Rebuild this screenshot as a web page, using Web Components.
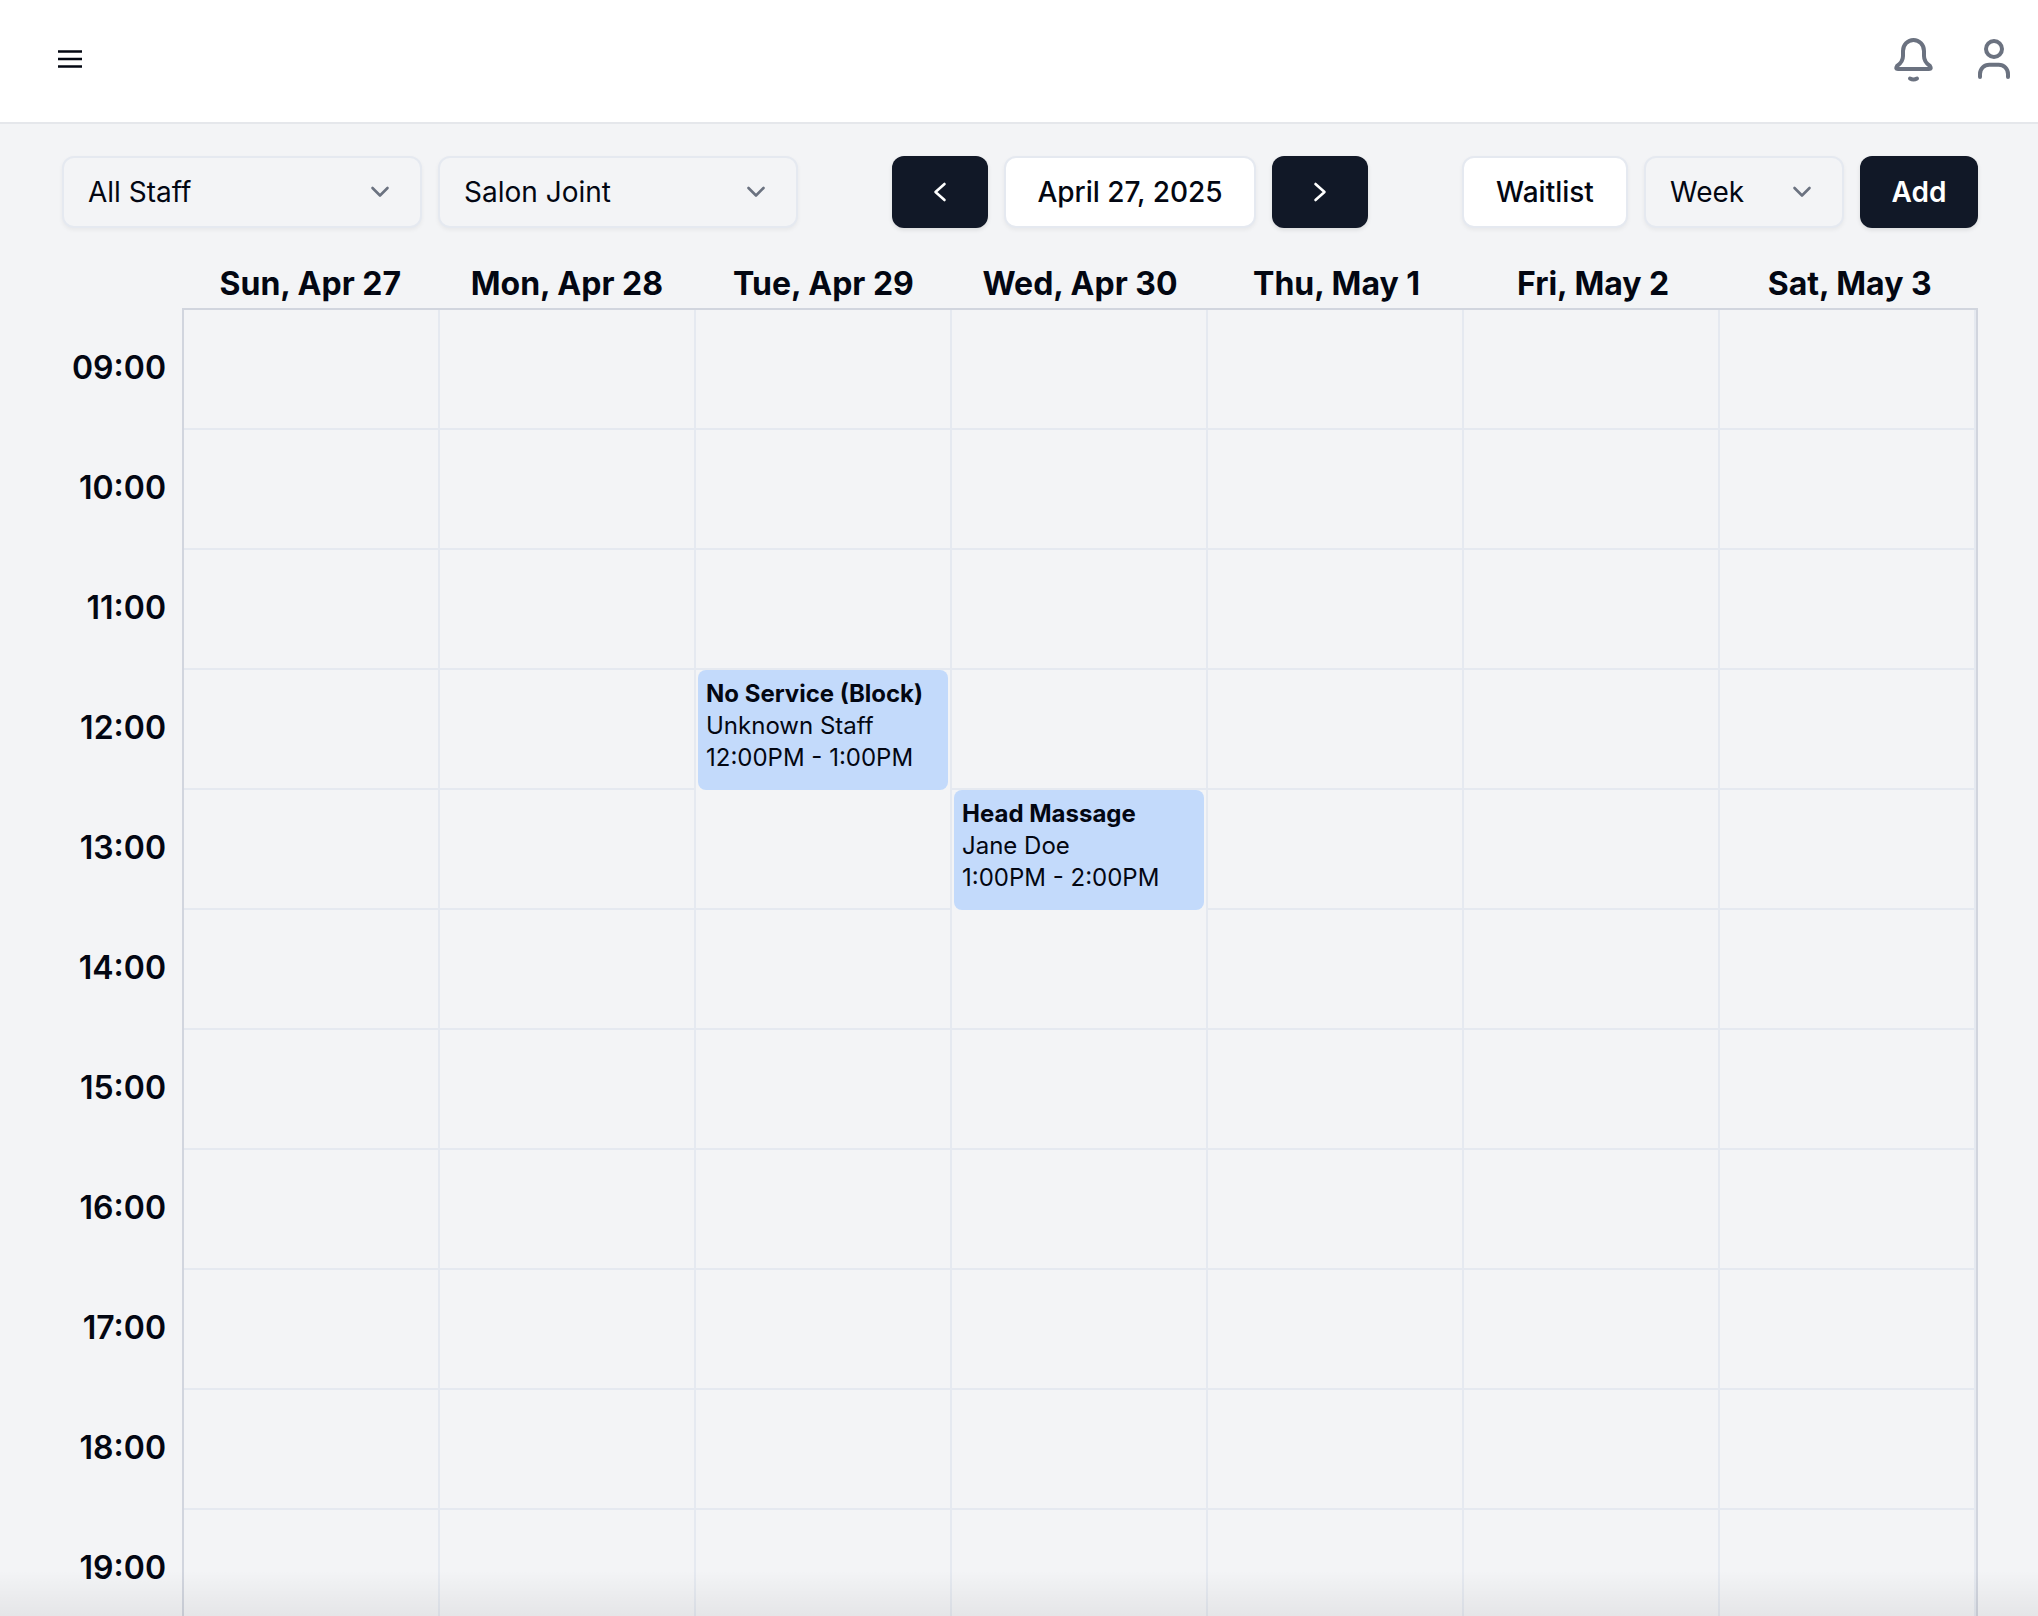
<!DOCTYPE html>
<html><head><meta charset="utf-8"><style>
html,body{margin:0;height:100%;overflow:hidden;background:#f3f4f6;font-family:Inter,"Liberation Sans",sans-serif;color:#030712}
</style></head><body>
<app-shell>
<top-bar></top-bar>
<main-tools></main-tools>
<week-grid></week-grid>
</app-shell>
<script>
const def=(n,html)=>customElements.define(n,class extends HTMLElement{constructor(){super();this.attachShadow({mode:'open'}).innerHTML=typeof html==='function'?html(this):html}});
const chev='<svg width="24" height="16" viewBox="0 0 24 16" fill="none" stroke="#6b7280" stroke-width="2.6" stroke-linecap="round" stroke-linejoin="round"><path d="M4.500 4 12 11.500 19.500 4"/></svg>';
def('app-shell',`<style>:host{display:flex;flex-direction:column;width:2038px;height:1616px;overflow:hidden;position:relative}
.fade{position:absolute;left:0;right:0;bottom:0;height:46px;background:linear-gradient(to bottom,rgba(0,0,0,0),rgba(0,0,0,.06));pointer-events:none}</style><slot></slot><div class="fade"></div>`);
def('top-bar',`<style>:host{display:flex;align-items:center;justify-content:space-between;height:122px;flex:none;background:#fff;border-bottom:2px solid #e5e7eb;padding:0 26px 0 58px}
.r{display:flex;align-items:center;gap:40px}svg{display:block}</style>
<svg width="24" height="20" viewBox="0 0 24 20" fill="none" stroke="#030712" stroke-width="2.600" style="margin-top:-4px"><path d="M0 2.500h24M0 10h24M0 17.500h24"/></svg>
<div class="r">
<svg width="44" height="48" viewBox="0 0 44 48" fill="none" stroke="#6b7280" stroke-width="4" stroke-linecap="round" stroke-linejoin="round" style="margin-top:-2px"><path d="M11 15A10.500 11 0 0 1 32 15V20C32 25 35 28 38 30Q40 33 37 33H6Q3 33 5 30C8 28 11 25 11 20Z"/><path d="M18 42.500Q21.500 44.500 25 42.500"/></svg>
<svg width="36" height="44" viewBox="0 0 36 44" fill="none" stroke="#6b7280" stroke-width="4" stroke-linecap="round" stroke-linejoin="round" style="margin-top:-4px"><circle cx="18" cy="12" r="8"/><path d="M4 40V37A9.300 9.300 0 0 1 13.300 27.700H22.700A9.300 9.300 0 0 1 32 37V40"/></svg>
</div>`);
def('tool-select',h=>`<style>:host{display:flex;align-items:center;justify-content:space-between;box-sizing:border-box;height:72px;width:${h.getAttribute('w')}px;padding:0 28px 0 24px;background:#f3f4f6;border:2px solid #e5e9f0;border-radius:12px;box-shadow:0 2px 4px rgba(0,0,0,.05);font-size:28px;color:#030712}
svg{display:block}</style><span><slot></slot></span>${chev}`);
def('tool-btn',h=>{const d=h.hasAttribute('dark');return `<style>:host{display:flex;align-items:center;justify-content:center;box-sizing:border-box;height:72px;width:${h.getAttribute('w')}px;border-radius:12px;font-size:28px;font-weight:${h.hasAttribute('bold')?600:500};${d?'background:#111827;color:#fff;box-shadow:0 2px 4px rgba(0,0,0,.1)':'background:#fff;color:#030712;border:2px solid #e5e9f0;box-shadow:0 2px 4px rgba(0,0,0,.05)'}}
svg{display:block}</style><slot></slot>`});
const arrow=d=>`<svg width="24" height="24" viewBox="0 0 24 24" fill="none" stroke="#fff" stroke-width="2.600" stroke-linecap="round" stroke-linejoin="round"><path d="${d}"/></svg>`;
def('main-tools',`<style>:host{display:flex;align-items:center;justify-content:space-between;flex:none;padding:32px 60px 0 62px;height:72px}
.g{display:flex;align-items:center;gap:16px}</style>
<div class="g"><tool-select w="360">All Staff</tool-select><tool-select w="360">Salon Joint</tool-select></div>
<div class="g">
<tool-btn dark w="96">${arrow('M16.500 4 7.500 12l9 8')}</tool-btn>
<tool-btn w="252">April 27, 2025</tool-btn>
<tool-btn dark w="96">${arrow('m7.500 4 9 8-9 8')}</tool-btn></div>
<div class="g"><tool-btn w="166">Waitlist</tool-btn><tool-select w="200">Week</tool-select><tool-btn dark bold w="118">Add</tool-btn></div>`);
def('cal-event',`<style>:host{display:block;box-sizing:border-box;height:120px;width:250px;margin-left:2px;padding:8px;background:#c3dafb;border-radius:8px;font-size:24px;line-height:32px;color:#030712;overflow:hidden}
b{display:block;font-weight:700}</style><b><slot name="t"></slot></b><div><slot name="who"></slot></div><div><slot name="when"></slot></div>`);
const days=['Sun, Apr 27','Mon, Apr 28','Tue, Apr 29','Wed, Apr 30','Thu, May 1','Fri, May 2','Sat, May 3'];
const hours=[9,10,11,12,13,14,15,16,17,18,19];
def('week-grid',`<style>:host{display:block;flex:none;padding:32px 60px 0 62px}
.head{display:grid;grid-template-columns:120px repeat(7,1fr);height:48px}
.head span{font-size:32px;font-weight:700;text-align:center;line-height:48px}
.body{display:grid;grid-template-columns:120px 1796px}
.times div{height:120px;display:flex;align-items:center;justify-content:flex-end;padding:0 16px 2px 0;font-size:32px;font-weight:600;box-sizing:border-box}
.cells{display:grid;grid-template-columns:repeat(7,256px);grid-auto-rows:120px;border:2px solid #d1d5de;border-bottom:0}
.c{border-right:2px solid #e5e9f0;border-bottom:2px solid #e5e9f0;box-sizing:border-box;min-width:0}
.e{border-bottom:0}</style>
<div class="head"><span></span>${days.map(d=>`<span>${d}</span>`).join('')}</div>
<div class="body"><div class="times">${hours.map(h=>`<div>${String(h).padStart(2,'0')}:00</div>`).join('')}</div>
<div class="cells">${hours.map(h=>days.map((d,i)=>{
 if(h==12&&i==2)return `<div class="c e"><cal-event><span slot="t">No Service (Block)</span><span slot="who">Unknown Staff</span><span slot="when">12:00PM - 1:00PM</span></cal-event></div>`;
 if(h==13&&i==3)return `<div class="c e"><cal-event><span slot="t">Head Massage</span><span slot="who">Jane Doe</span><span slot="when">1:00PM - 2:00PM</span></cal-event></div>`;
 return '<div class="c"></div>'}).join('')).join('')}</div></div>`);
</script>
</body></html>
